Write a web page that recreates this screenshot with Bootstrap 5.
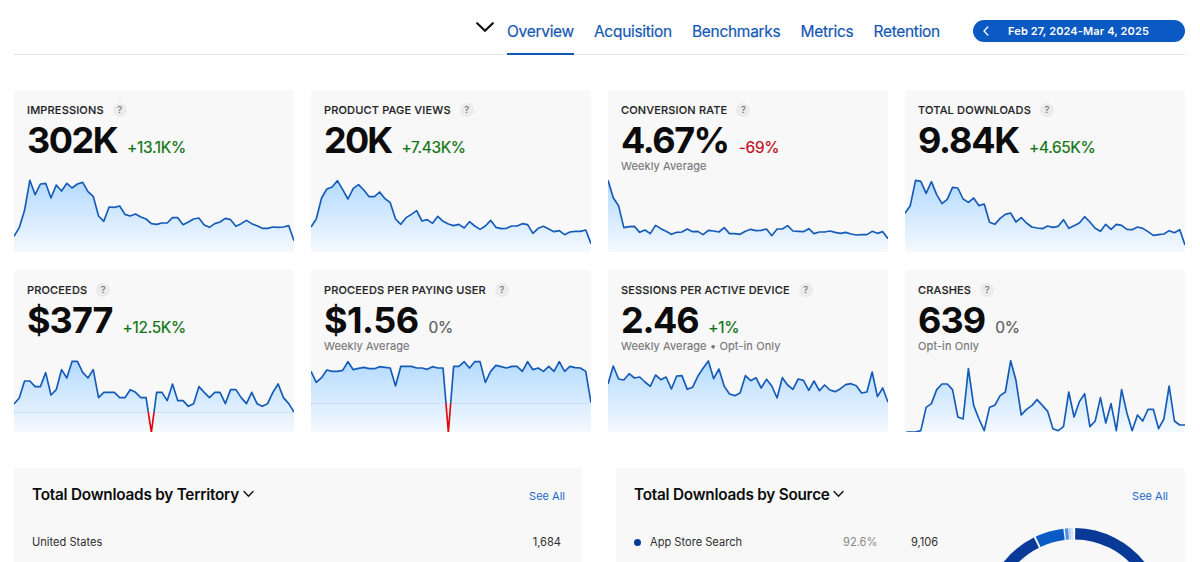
<!DOCTYPE html>
<html lang="en">
<head>
<meta charset="utf-8">
<meta name="viewport" content="width=device-width, initial-scale=1">
<title>App Analytics</title>
<link href="https://cdn.jsdelivr.net/npm/bootstrap@5.3.0/dist/css/bootstrap.min.css" rel="stylesheet">
<style>
body{font-family:Inter,"Liberation Sans",sans-serif;color:#0c0c0c;background:#fff;height:562px;overflow:hidden}
.page{padding:0 15px 0 14px}
.topbar{height:55px;border-bottom:1px solid #e2e2e4}
.topbar .nav{gap:20px;height:55px}
.topbar .nav-link{padding:19px 0 0;height:55px;font-size:15.5px;line-height:26px;color:#1358b5;letter-spacing:-.29px;white-space:nowrap;-webkit-text-stroke:.2px #1358b5}
.topbar .nav-link.active{border-bottom:2px solid #1358b5}
.app-caret{width:18px;height:11px;margin:22px 13px 0 0}
.range{width:212px;height:22px;margin:20px 0 0 33px;background:#0b59c2;color:#fff;border-radius:11px;font-size:11px;font-weight:600;letter-spacing:.13px;line-height:22px;border:0}
.metrics{display:grid;grid-template-columns:repeat(4,280px);grid-auto-rows:162px;gap:18px 17px;margin-top:35px}
.metric,.panel{background:#f8f8f8;border:0;border-radius:3px;overflow:hidden}
.metric-text{height:87px;padding:13px 0 0 13px;white-space:nowrap}
.metric-name{font-size:11px;line-height:15px;font-weight:500;color:#242426;margin:0;letter-spacing:.16px;-webkit-text-stroke:.15px #242426}
.help{width:14px;height:14px;border-radius:50%;background:#ebebeb;color:#626266;font-size:9.5px;line-height:14px;text-align:center;margin:-1px 0 0 9px}
.figure-value{font-size:36px;line-height:36px;font-weight:700;color:#0c0c0c;margin:4px 0}
.delta{font-size:15.5px;line-height:20px;margin-left:10px;letter-spacing:-.3px;-webkit-text-stroke:.2px currentColor}
.up{color:#107314}.down{color:#c50b26}.flat{color:#5c5c60}
.note{font-size:11px;line-height:13px;color:#77777a;letter-spacing:.13px;margin-top:-2px;-webkit-text-stroke:.15px currentColor}
.spark{display:block;width:280px;height:75px}
.panels{display:grid;grid-template-columns:568px 569px;gap:34px;margin-top:36px}
.panel{height:94px;border-radius:3px 3px 0 0}
.panel h2{font-size:15.3px;line-height:20px;font-weight:600;margin:0;letter-spacing:-.22px}
.panel h2 svg{position:relative;top:-1px}
.panel-head{padding:16.5px 17px .5px 18px}
.see-all{font-size:11px;color:#1a66c7;text-decoration:none;line-height:18px;padding-top:2px}
.data-line{font-size:11.1px;line-height:16px;color:#2e2e30;padding-top:29px}
.dot{width:7px;height:7px;border-radius:50%;background:#093a98}
.share{color:#88888b}
.source-name{width:202px;padding-left:9px}.source-share{width:68px}.source-count{width:58px}
.donut{width:182px;height:182px;margin:22px 0 0 14px}
</style>
</head>
<body>
<main class="page">
  <header class="topbar d-flex justify-content-end align-items-start">
    <svg class="app-caret" viewBox="0 0 18 11"><path d="M1.2 1.2 9 8.8l7.8-7.6" fill="none" stroke="#111" stroke-width="2.2" stroke-linecap="round"/></svg>
    <nav class="nav flex-nowrap">
      <a class="nav-link active" href="#">Overview</a>
      <a class="nav-link" href="#">Acquisition</a>
      <a class="nav-link" href="#">Benchmarks</a>
      <a class="nav-link" href="#">Metrics</a>
      <a class="nav-link" href="#">Retention</a>
    </nav>
    <button class="range d-flex align-items-center p-0 flex-shrink-0" type="button">
      <svg width="6" height="10" viewBox="0 0 6 10" style="margin-left:10px"><path d="M4.8 1 1 5l3.8 4" fill="none" stroke="#fff" stroke-width="1.3" stroke-linecap="round"/></svg>
      <span class="ms-3" style="padding-left:3px">Feb 27, 2024-Mar 4, 2025</span>
    </button>
  </header>

  <section class="metrics" id="metrics"></section>

  <section class="panels">
    <article class="panel card">
      <div class="panel-head d-flex justify-content-between">
        <h2>Total Downloads by Territory <svg width="11" height="8" viewBox="0 0 11 8"><path d="m1 1.5 4.5 4.7L10 1.5" fill="none" stroke="#111" stroke-width="1.4" stroke-linecap="round"/></svg></h2>
        <a class="see-all" href="#">See All</a>
      </div>
      <div class="data-line d-flex justify-content-between" style="padding-left:18px;padding-right:21px"><span>United States</span><span>1,684</span></div>
    </article>
    <article class="panel card">
      <div class="panel-head d-flex justify-content-between">
        <h2>Total Downloads by Source <svg width="11" height="8" viewBox="0 0 11 8"><path d="m1 1.5 4.5 4.7L10 1.5" fill="none" stroke="#111" stroke-width="1.4" stroke-linecap="round"/></svg></h2>
        <a class="see-all" href="#">See All</a>
      </div>
      <div class="d-flex" style="padding-left:18px">
        <div class="data-line d-flex align-items-center align-self-start">
          <span class="dot"></span><span class="source-name">App Store Search</span><span class="source-share share">92.6%</span><span class="source-count">9,106</span>
        </div>
        <svg class="donut flex-shrink-0" viewBox="-91 -91 182 182" id="donut"></svg>
      </div>
    </article>
  </section>
</main>
<script src="https://cdn.jsdelivr.net/npm/bootstrap@5.3.0/dist/js/bootstrap.bundle.min.js"></script>
<script>
// Each series holds weekly points measured downwards on a shared 290-516 scale;
// track is the letter spacing of the large figure.
const metrics = [
 {name:'IMPRESSIONS',value:'302K',track:-1.5,delta:'+13.1K%',tone:'up',pts:[468,442,390,300,343,311,309,353,314,332,309,323,311,306,334,348,407,423,380,381,377,402,407,401,410,416,430,432,428,428,412,412,433,425,416,413,434,441,430,425,414,418,438,430,420,430,436,444,444,440,441,440,436,481]},
 {name:'PRODUCT PAGE VIEWS',value:'20K',track:-1.8,delta:'+7.43K%',tone:'up',pts:[440,416,353,326,320,301,328,356,324,313,329,349,349,335,355,367,416,432,412,402,391,422,418,429,408,423,431,436,432,443,424,437,447,437,420,441,445,444,437,437,430,433,459,444,438,446,454,451,463,455,453,453,449,490]},
 {name:'CONVERSION RATE',value:'4.67%',track:-1.45,delta:'-69%',tone:'down',note:'Weekly Average',pts:[300,352,376,442,439,438,456,449,460,435,445,453,462,456,455,446,454,453,463,450,452,455,442,460,460,462,453,447,451,450,446,466,446,446,436,452,453,454,445,460,455,455,452,456,459,456,461,464,463,463,453,459,454,475]},
 {name:'TOTAL DOWNLOADS',value:'9.84K',track:-1.2,delta:'+4.65K%',tone:'up',pts:[399,376,300,303,339,304,343,370,357,321,323,356,366,353,376,371,426,432,414,402,398,425,412,428,440,443,445,437,441,438,418,444,436,428,409,425,444,453,432,447,432,435,447,448,440,444,454,465,463,461,451,457,448,494]},
 {name:'PROCEEDS',value:'$377',track:-.95,delta:'+12.5K%',tone:'up',zero:456,pts:[431,413,362,362,379,379,337,404,388,328,353,303,303,336,353,328,412,396,396,396,412,412,388,396,412,412,516,396,396,421,371,421,421,438,430,379,396,412,396,396,430,388,388,412,430,396,430,438,430,396,371,412,430,455]},
 {name:'PROCEEDS PER PAYING USER',value:'$1.56',track:-.55,delta:'0%',tone:'flat',note:'Weekly Average',zero:429,pts:[333,366,352,329,333,333,330,304,328,324,321,325,325,319,321,323,377,318,318,318,323,323,327,319,323,323,516,318,318,304,323,304,304,366,333,315,319,323,318,318,333,304,328,323,333,318,333,304,333,318,322,323,333,427]},
 {name:'SESSIONS PER ACTIVE DEVICE',value:'2.46',track:-1.3,delta:'+1%',tone:'up',note:'Weekly Average • Opt-in Only',pts:[371,317,356,359,340,353,350,365,378,344,358,350,386,347,346,387,381,348,324,302,355,326,378,401,406,398,346,361,352,383,357,377,413,352,374,387,356,360,390,362,391,374,389,394,385,373,370,376,398,395,335,409,383,426]},
 {name:'CRASHES',value:'639',track:-.9,delta:'0%',tone:'flat',note:'Opt-in Only',pts:[515,515,515,511,441,430,388,371,371,388,470,476,325,435,476,511,441,435,406,395,301,360,464,447,436,418,435,453,505,511,499,395,470,424,400,499,482,412,488,430,511,388,458,511,464,482,447,447,505,476,377,482,494,494]}
];
document.getElementById('metrics').innerHTML = metrics.map((m,i) => {
  const line = m.pts.map((y,k) => (k*840/53).toFixed(1)+','+y).join(' ');
  const stroke = (color,clip) => `<polyline points="${line}" fill="none" stroke="${color}" stroke-width="5" stroke-linejoin="round" ${clip?`clip-path="url(#${clip})"`:''}/>`;
  const zero = m.zero ? `<clipPath id="above${i}"><rect x="0" y="280" width="840" height="${m.zero-280}"/></clipPath><clipPath id="below${i}"><rect x="0" y="${m.zero}" width="840" height="100"/></clipPath>` : '';
  return `<article class="metric card"><div class="metric-text">
    <div class="d-flex align-items-center"><h2 class="metric-name">${m.name}</h2><span class="help">?</span></div>
    <div class="d-flex align-items-baseline"><span class="figure-value" style="letter-spacing:${m.track}px">${m.value}</span><span class="delta ${m.tone}">${m.delta}</span></div>
    ${m.note?`<div class="note">${m.note}</div>`:''}</div>
    <svg class="spark" viewBox="0 290 840 225"><defs><linearGradient id="fill${i}" gradientUnits="userSpaceOnUse" x1="0" y1="300" x2="0" y2="516"><stop offset="0" stop-color="#b3daff"/><stop offset="1" stop-color="#f5f9fe"/></linearGradient>${zero}</defs>
    <polygon points="0,516 ${line} 840,516" fill="url(#fill${i})"/>
    ${m.zero?`<path d="M0 ${m.zero}H840" stroke="#b4c0cf" stroke-width="3" stroke-dasharray="3 5"/>`+stroke('#145bb8','above'+i)+stroke('#e30613','below'+i):stroke('#145bb8')}</svg></article>`;
}).join('');

// Donut slices: [start degree, end degree, colour], clockwise from twelve o'clock.
const at = (d,r) => [r*Math.sin(d*Math.PI/180), -r*Math.cos(d*Math.PI/180)].map(n=>n.toFixed(2)).join(' ');
document.getElementById('donut').innerHTML = [[.8,333.5,'#093a98'],[334.8,353.2,'#0b5bc4'],[354.1,356.3,'#4c8ddc'],[356.9,357.8,'#9cc2ef'],[358.3,359.2,'#c5dcf6']]
  .map(([a,b,c]) => `<path d="M${at(a,84.3)}A84.3 84.3 0 ${b-a>180?1:0} 1 ${at(b,84.3)}" fill="none" stroke="${c}" stroke-width="11.4"/>`).join('');
</script>
</body>
</html>
